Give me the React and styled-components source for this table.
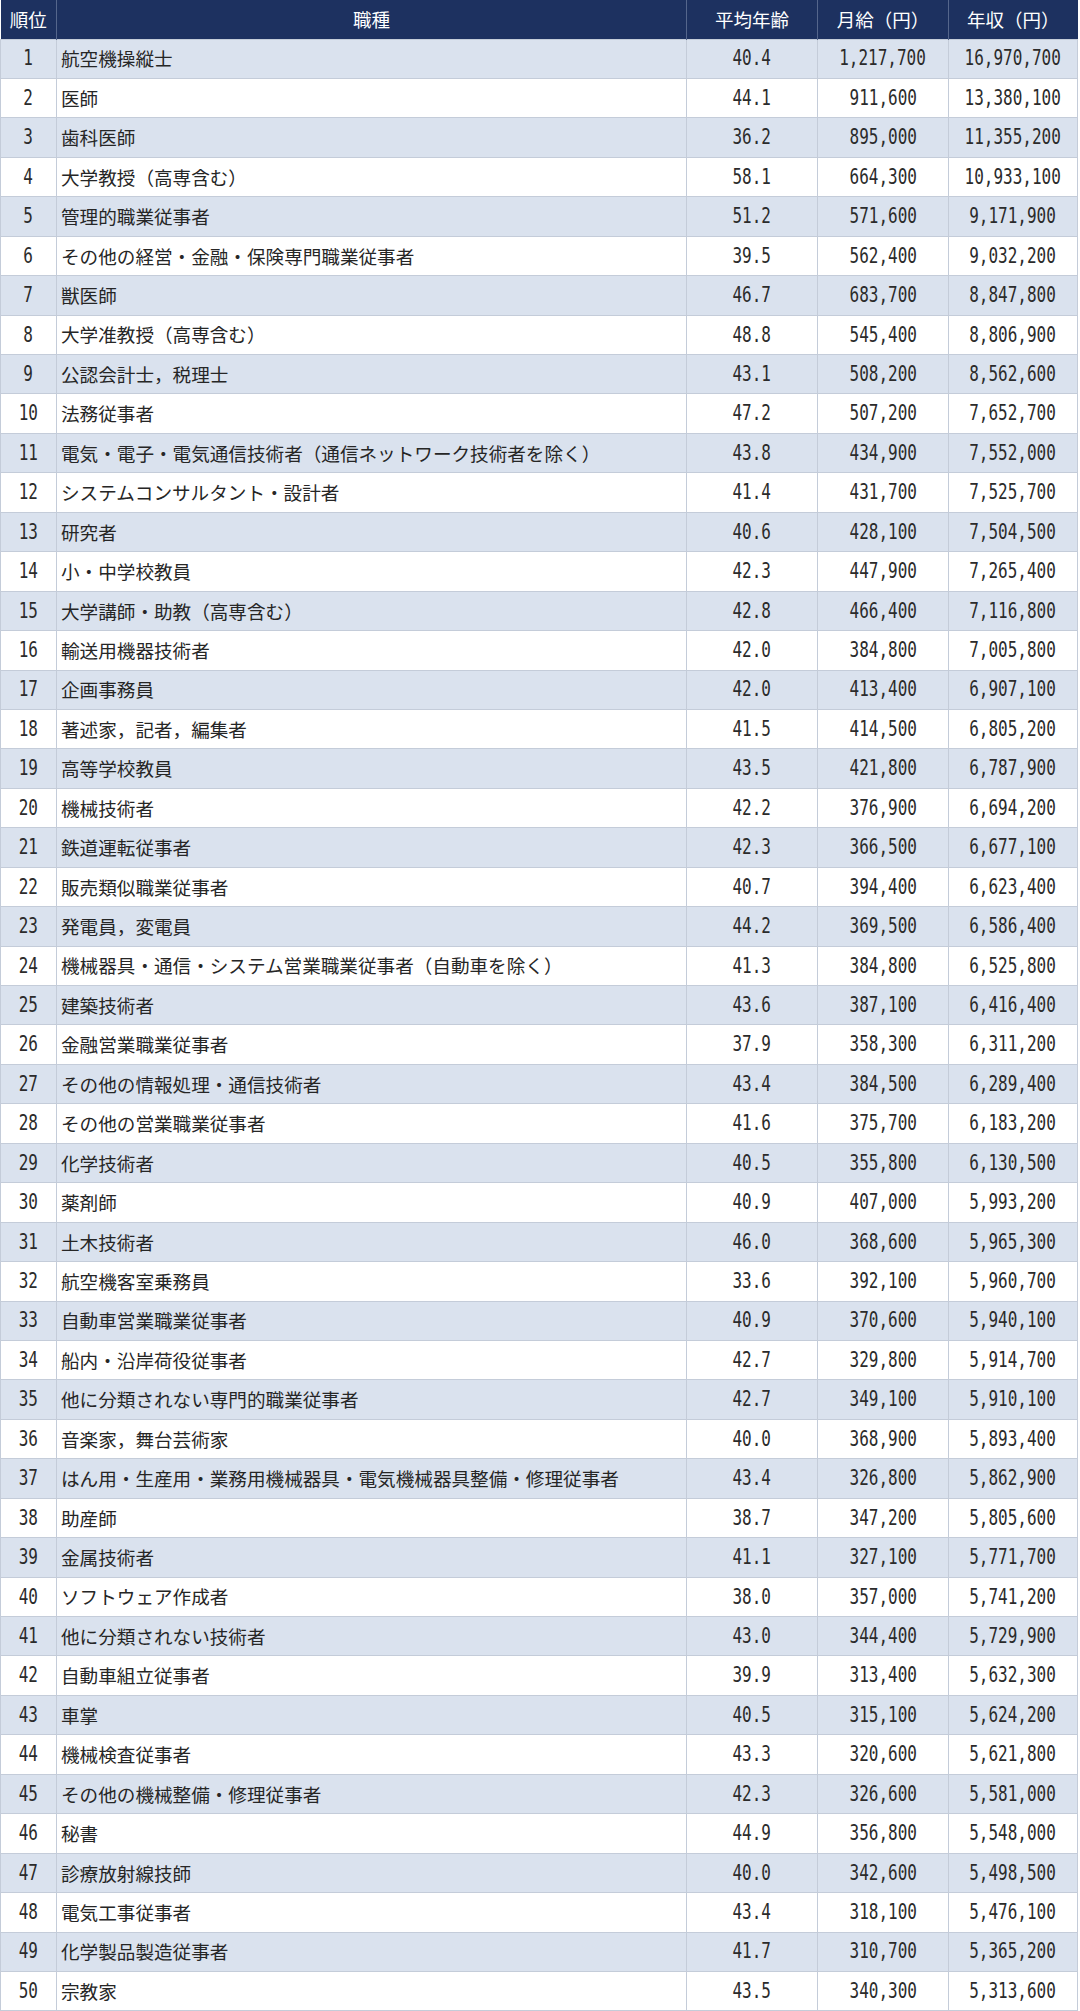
import React from "react";
import styled, { createGlobalStyle } from "styled-components";

const GlobalStyle = createGlobalStyle`
  html, body { margin: 0; padding: 0; background: #ffffff; }
  body { font-family: "Noto Sans CJK JP", "Noto Sans", sans-serif; }
`;

const rows = [
  ["航空機操縦士", "40.4", "1,217,700", "16,970,700"],
  ["医師", "44.1", "911,600", "13,380,100"],
  ["歯科医師", "36.2", "895,000", "11,355,200"],
  ["大学教授（高専含む）", "58.1", "664,300", "10,933,100"],
  ["管理的職業従事者", "51.2", "571,600", "9,171,900"],
  ["その他の経営・金融・保険専門職業従事者", "39.5", "562,400", "9,032,200"],
  ["獣医師", "46.7", "683,700", "8,847,800"],
  ["大学准教授（高専含む）", "48.8", "545,400", "8,806,900"],
  ["公認会計士，税理士", "43.1", "508,200", "8,562,600"],
  ["法務従事者", "47.2", "507,200", "7,652,700"],
  ["電気・電子・電気通信技術者（通信ネットワーク技術者を除く）", "43.8", "434,900", "7,552,000"],
  ["システムコンサルタント・設計者", "41.4", "431,700", "7,525,700"],
  ["研究者", "40.6", "428,100", "7,504,500"],
  ["小・中学校教員", "42.3", "447,900", "7,265,400"],
  ["大学講師・助教（高専含む）", "42.8", "466,400", "7,116,800"],
  ["輸送用機器技術者", "42.0", "384,800", "7,005,800"],
  ["企画事務員", "42.0", "413,400", "6,907,100"],
  ["著述家，記者，編集者", "41.5", "414,500", "6,805,200"],
  ["高等学校教員", "43.5", "421,800", "6,787,900"],
  ["機械技術者", "42.2", "376,900", "6,694,200"],
  ["鉄道運転従事者", "42.3", "366,500", "6,677,100"],
  ["販売類似職業従事者", "40.7", "394,400", "6,623,400"],
  ["発電員，変電員", "44.2", "369,500", "6,586,400"],
  ["機械器具・通信・システム営業職業従事者（自動車を除く）", "41.3", "384,800", "6,525,800"],
  ["建築技術者", "43.6", "387,100", "6,416,400"],
  ["金融営業職業従事者", "37.9", "358,300", "6,311,200"],
  ["その他の情報処理・通信技術者", "43.4", "384,500", "6,289,400"],
  ["その他の営業職業従事者", "41.6", "375,700", "6,183,200"],
  ["化学技術者", "40.5", "355,800", "6,130,500"],
  ["薬剤師", "40.9", "407,000", "5,993,200"],
  ["土木技術者", "46.0", "368,600", "5,965,300"],
  ["航空機客室乗務員", "33.6", "392,100", "5,960,700"],
  ["自動車営業職業従事者", "40.9", "370,600", "5,940,100"],
  ["船内・沿岸荷役従事者", "42.7", "329,800", "5,914,700"],
  ["他に分類されない専門的職業従事者", "42.7", "349,100", "5,910,100"],
  ["音楽家，舞台芸術家", "40.0", "368,900", "5,893,400"],
  ["はん用・生産用・業務用機械器具・電気機械器具整備・修理従事者", "43.4", "326,800", "5,862,900"],
  ["助産師", "38.7", "347,200", "5,805,600"],
  ["金属技術者", "41.1", "327,100", "5,771,700"],
  ["ソフトウェア作成者", "38.0", "357,000", "5,741,200"],
  ["他に分類されない技術者", "43.0", "344,400", "5,729,900"],
  ["自動車組立従事者", "39.9", "313,400", "5,632,300"],
  ["車掌", "40.5", "315,100", "5,624,200"],
  ["機械検査従事者", "43.3", "320,600", "5,621,800"],
  ["その他の機械整備・修理従事者", "42.3", "326,600", "5,581,000"],
  ["秘書", "44.9", "356,800", "5,548,000"],
  ["診療放射線技師", "40.0", "342,600", "5,498,500"],
  ["電気工事従事者", "43.4", "318,100", "5,476,100"],
  ["化学製品製造従事者", "41.7", "310,700", "5,365,200"],
  ["宗教家", "43.5", "340,300", "5,313,600"],
];

const Table = styled.table`
  width: 1077px;
  border-collapse: collapse;
  table-layout: fixed;
`;

const HeadRow = styled.tr`
  height: 39px;
`;

const HeadCell = styled.th`
  background: #1d3160;
  color: #ffffff;
  font-weight: 400;
  font-size: 18.5px;
  text-align: center;
  padding: 0;
  border-left: 1px solid #55668c;
  &:first-child { border-left: none; }
`;

const Row = styled.tr`
  height: 39.44px;
  background: ${(p) => (p.$striped ? "#dae2ee" : "#ffffff")};
`;

const Cell = styled.td`
  border: 1px solid #c4ccd9;
  padding: 0 ${(p) => (p.$left ? "4px" : "0")};
  text-align: ${(p) => (p.$left ? "left" : "center")};
  font-size: 18.6px;
  line-height: 1;
  color: #262626;
  white-space: nowrap;
  overflow: hidden;
  font-family: "Noto Sans CJK JP", "Noto Sans", sans-serif;
`;

/* narrow monospaced figures, like the condensed half-width digits of the source */
const Num = styled.span`
  display: inline-block;
  font-family: "DejaVu Sans Mono", "Liberation Mono", monospace;
  font-size: 20.5px;
  color: #2b2b2b;
  transform: scaleX(0.78);
  transform-origin: center;
`;

export default function App() {
  return (
    <>
      <GlobalStyle />
      <Table>
        <colgroup>
          <col style={{ width: 56 }} />
          <col style={{ width: 630 }} />
          <col style={{ width: 131 }} />
          <col style={{ width: 131 }} />
          <col style={{ width: 129 }} />
        </colgroup>
        <thead>
          <HeadRow>
            <HeadCell>順位</HeadCell>
            <HeadCell>職種</HeadCell>
            <HeadCell>平均年齢</HeadCell>
            <HeadCell>月給（円）</HeadCell>
            <HeadCell>年収（円）</HeadCell>
          </HeadRow>
        </thead>
        <tbody>
          {rows.map((r, i) => (
            <Row key={i} $striped={i % 2 === 0}>
              <Cell><Num>{i + 1}</Num></Cell>
              <Cell $left>{r[0]}</Cell>
              <Cell><Num>{r[1]}</Num></Cell>
              <Cell><Num>{r[2]}</Num></Cell>
              <Cell><Num>{r[3]}</Num></Cell>
            </Row>
          ))}
        </tbody>
      </Table>
    </>
  );
}
